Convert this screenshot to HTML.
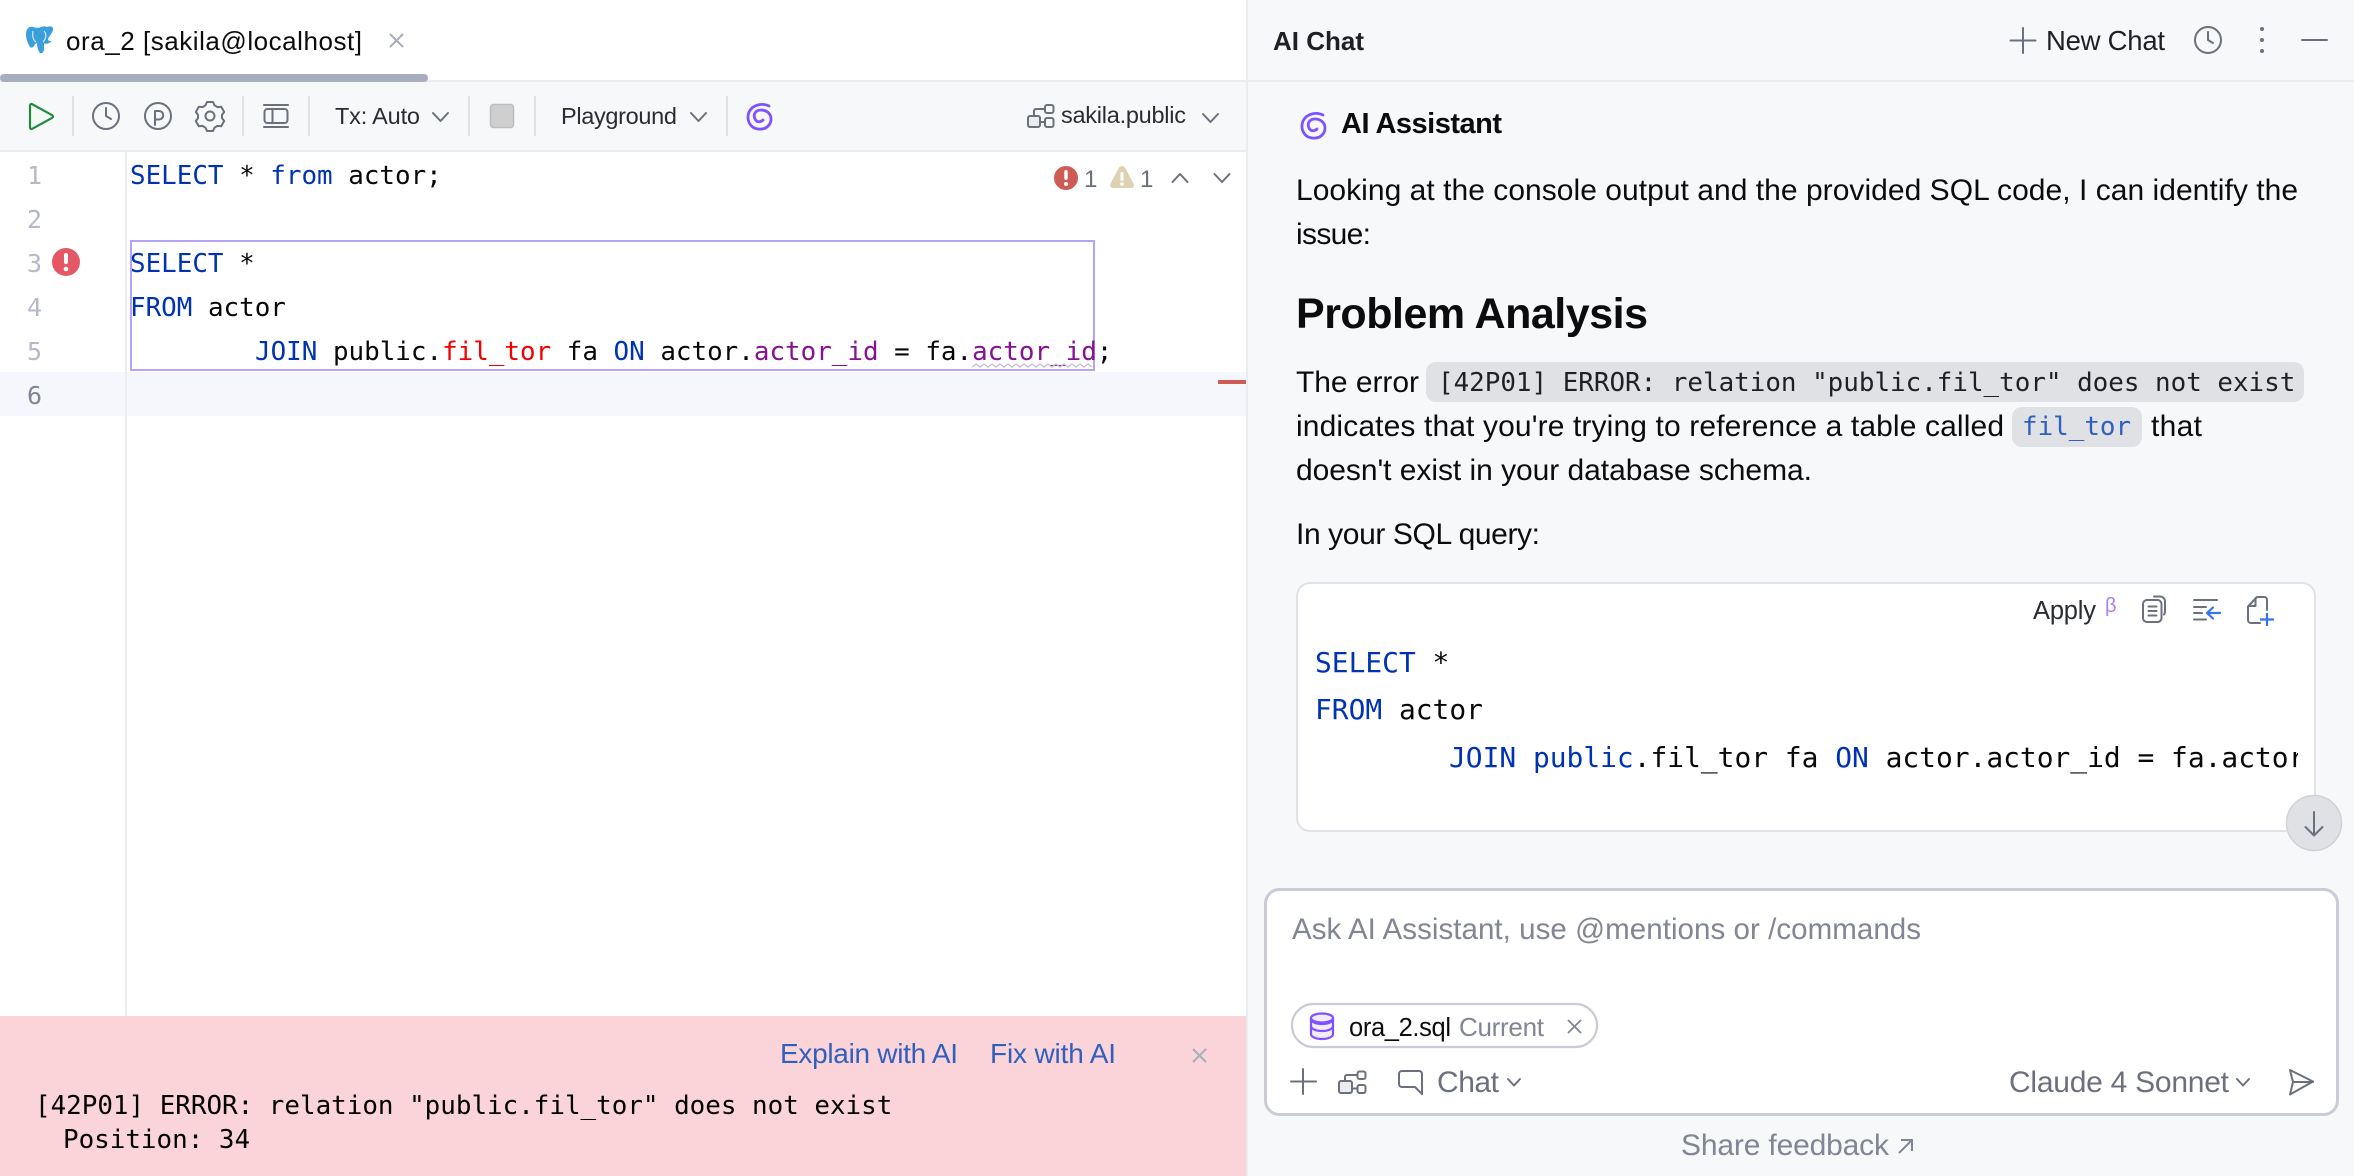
<!DOCTYPE html>
<html><head><meta charset="utf-8"><title>ora_2</title>
<style>
html,body{margin:0;padding:0;background:#fff;overflow:hidden}
svg{display:block}
text{font-family:"Liberation Sans",sans-serif;white-space:pre}
.m{font-family:"DejaVu Sans Mono","Liberation Mono",monospace;font-size:25.9px;fill:#080808}
.c{font-size:27.9px}
.k{fill:#0033b3}.r{fill:#f50000}.p{fill:#871094}
.n{font-family:"DejaVu Sans Mono","Liberation Mono",monospace;font-size:25px;fill:#b5b9c9}
.i{fill:none;stroke:#6c707e;stroke-width:2;stroke-linecap:round;stroke-linejoin:round}
.b{font-size:30px;fill:#0b0c0e}
.t{font-size:23.5px;fill:#2a2c33}
.g{font-size:30px;fill:#6c707e}
.v{fill:none;stroke:#7f52ff;stroke-width:2.8;stroke-linecap:round;stroke-linejoin:round}
</style></head><body>
<svg width="2354" height="1176" viewBox="0 0 2354 1176" xmlns="http://www.w3.org/2000/svg">
<rect width="2354" height="1176" fill="#fff"/>
<!-- right panel -->
<rect x="1246" width="1108" height="1176" fill="#f7f8fa"/>
<!-- toolbar -->
<rect y="82" width="1246" height="68" fill="#f7f8fa"/>
<rect y="80" width="2354" height="2" fill="#ebecf0"/>
<rect y="150" width="1246" height="2" fill="#ebecf0"/>
<rect x="1246" width="2" height="1176" fill="#ebecf0"/>
<rect x="0" y="74" width="428" height="8" rx="4" fill="#a8adbd"/>

<!-- tab -->
<path d="M33 27c-4-1-7 2-7 7 0 5 2 10 4 13 1 1 3 1 4-1 1-2 2-3 3-3 0 3 1 8 3 10 2 1 4-1 4-4l0-6c1 1 3 1 5 0 2-1 3-2 2-2-1 0-3 0-3-2 1-3 5-6 5-10 0-3-3-3-6-2-2-1-4-1-6 0-2 1-5 1-8 0z" fill="#3b9fdb"/>
<path d="M33 31c-1 4 0 9 3 11M44 31c3 3 2 8-1 11" fill="none" stroke="#cfe8f7" stroke-width="1.200"/>
<text x="66" y="50" font-size="26" fill="#0b0c0e" textLength="296" lengthAdjust="spacing">ora_2 [sakila@localhost]</text>
<path d="M390 34l13 13M403 34l-13 13" fill="none" stroke="#a8adbd" stroke-width="2"/>

<!-- toolbar icons -->
<path d="M30 105.500v22a1.500 1.500 0 0 0 2.200 1.300l20-11a1.500 1.500 0 0 0 0-2.600l-20-11a1.500 1.500 0 0 0-2.200 1.300z" fill="#f4fbf5" stroke="#208a3c" stroke-width="2.200" stroke-linejoin="round"/>
<rect x="72" y="96" width="2" height="40" fill="#dfe1e5"/>
<circle cx="106" cy="116" r="13" class="i"/><path d="M106 108v8l5 3" class="i"/>
<circle cx="158" cy="116" r="13" class="i"/><path d="M155 125v-14h4a4 4 0 0 1 0 8.500h-4" class="i"/>
<path d="M207 104.500h6l1.500 3.300 3 1.800 3.700-.4 3 5.300-2.200 2.900v3.200l2.200 2.900-3 5.300-3.700-.4-3 1.800-1.500 3.300h-6l-1.500-3.300-3-1.800-3.700.4-3-5.300 2.200-2.900v-3.200l-2.200-2.900 3-5.300 3.700.4 3-1.800z" class="i" transform="translate(0 -2.500)"/>
<circle cx="210" cy="116" r="4.500" class="i"/>
<rect x="242" y="96" width="2" height="40" fill="#dfe1e5"/>
<path d="M264 105h24M264 127h24" class="i"/><rect x="264.500" y="109" width="23" height="14" rx="3" class="i"/><path d="M272.500 109.500v13" class="i"/>
<rect x="308" y="96" width="2" height="40" fill="#dfe1e5"/>
<text x="335" y="124" class="t" textLength="85" lengthAdjust="spacing">Tx: Auto</text>
<path d="M433 113l7.500 8 7.500-8" class="i"/>
<rect x="468" y="96" width="2" height="40" fill="#dfe1e5"/>
<rect x="490.500" y="104.500" width="23" height="23" rx="3" fill="#cfcfcf" stroke="#bdbdbd" stroke-width="1.500"/>
<rect x="534" y="96" width="2" height="40" fill="#dfe1e5"/>
<text x="561" y="124" class="t" textLength="116" lengthAdjust="spacing">Playground</text>
<path d="M691 113l7.500 8 7.500-8" class="i"/>
<rect x="726" y="96" width="2" height="40" fill="#dfe1e5"/>
<path d="M28 9C22 6 12 7 8 15C5 23 9 31 17 32C25 33 30 28 30 22C30 16 25 13 20 13C14 13 12 18 14 22C16 26 20 25 22 23" class="v" transform="translate(741 97)"/>

<rect x="1028" y="116" width="12" height="11" rx="2" fill="#ebecf0" stroke="#6c707e" stroke-width="2"/>
<rect x="1045" y="105" width="8.500" height="8" rx="2" fill="none" stroke="#6c707e" stroke-width="2"/>
<rect x="1045" y="118" width="8.500" height="9" rx="2" fill="none" stroke="#6c707e" stroke-width="2"/>
<path d="M1034 116v-5a2 2 0 0 1 2-2h9M1040 122h5" class="i"/>
<text x="1061" y="123" class="t" textLength="125" lengthAdjust="spacing">sakila.public</text>
<path d="M1203 114l7.500 8 7.500-8" class="i"/>

<!-- editor -->
<rect y="372" width="1246" height="44" fill="#f5f7fd"/>
<rect x="125" y="152" width="2" height="864" fill="#ebecf0"/>
<text x="27" y="184" class="n">1</text>
<text x="27" y="228" class="n">2</text>
<text x="27" y="272" class="n">3</text>
<text x="27" y="316" class="n">4</text>
<text x="27" y="360" class="n">5</text>
<text x="27" y="404" class="n" style="fill:#818594">6</text>
<circle cx="66" cy="262" r="14" fill="#e55765"/>
<rect x="64" y="253" width="4" height="11" rx="2" fill="#fff"/><circle cx="66" cy="269" r="2.300" fill="#fff"/>

<rect x="131" y="241" width="963" height="129" fill="none" stroke="#b5a3fb" stroke-width="2"/>
<text x="130" y="184" class="m"><tspan class="k">SELECT</tspan> * <tspan class="k">from</tspan> actor;</text>
<text x="130" y="272" class="m"><tspan class="k">SELECT</tspan> *</text>
<text x="130" y="316" class="m"><tspan class="k">FROM</tspan> actor</text>
<text x="255" y="360" class="m"><tspan class="k">JOIN</tspan> public.<tspan class="r">fil_tor</tspan> fa <tspan class="k">ON</tspan> actor.<tspan class="p">actor_id</tspan> = fa.<tspan class="p">actor_id</tspan>;</text>
<path d="M972 367l4-3 4 3 4-3 4 3 4-3 4 3 4-3 4 3 4-3 4 3 4-3 4 3 4-3 4 3 4-3 4 3 4-3 4 3 4-3 4 3 4-3 4 3 4-3 4 3 4-3 4 3 4-3 4 3 4-3 4 3" fill="none" stroke="#c0bec8" stroke-width="1.300"/>
<rect x="1218" y="380" width="28" height="4" fill="#cf5b56"/>

<circle cx="1066" cy="178" r="12" fill="#cf5b56"/>
<rect x="1064.300" y="170" width="3.400" height="10" rx="1.700" fill="#fff"/><circle cx="1066" cy="184" r="2" fill="#fff"/>
<text x="1084" y="187" font-size="24" fill="#6c707e">1</text>
<path d="M1122 166c1.500 0 2.500 1 3.500 2.500l8 15c1 2 0 4.500-2.500 4.500h-18c-2.500 0-3.500-2.500-2.500-4.500l8-15c1-1.500 2-2.500 3.500-2.500z" fill="#dfd1b1"/>
<rect x="1120.500" y="172" width="3" height="9" rx="1.500" fill="#fff"/><circle cx="1122" cy="184" r="1.800" fill="#fff"/>
<text x="1140" y="187" font-size="24" fill="#6c707e">1</text>
<path d="M1172.500 182l7.500-8 7.500 8" class="i"/>
<path d="M1214.500 174l7.500 8 7.500-8" class="i"/>

<!-- error panel -->
<rect y="1016" width="1246" height="160" fill="#fad4d8"/>
<text x="780" y="1063" font-size="28" fill="#315fbd" textLength="178" lengthAdjust="spacing">Explain with AI</text>
<text x="990" y="1063" font-size="28" fill="#315fbd" textLength="126" lengthAdjust="spacing">Fix with AI</text>
<path d="M1193 1049l13 13M1206 1049l-13 13" fill="none" stroke="#a8adbd" stroke-width="2"/>
<text x="35" y="1114" class="m" style="fill:#000">[42P01] ERROR: relation "public.fil_tor" does not exist</text>
<text x="63" y="1148" class="m" style="fill:#000">Position: 34</text>

<!-- AI chat header -->
<text x="1273" y="50" font-size="26" font-weight="700" fill="#1e2025" textLength="91" lengthAdjust="spacing">AI Chat</text>
<path d="M2023 28v25M2010.500 40.500h25" class="i"/>
<text x="2046" y="50" font-size="27.500" fill="#1e2025" textLength="119" lengthAdjust="spacing">New Chat</text>
<circle cx="2208" cy="40" r="13" class="i"/><path d="M2208 32v8l5 3" class="i"/>
<circle cx="2262" cy="29" r="2" fill="#6c707e"/><circle cx="2262" cy="40" r="2" fill="#6c707e"/><circle cx="2262" cy="51" r="2" fill="#6c707e"/>
<path d="M2302 40h25" class="i"/>

<!-- message -->
<path d="M28 9C22 6 12 7 8 15C5 23 9 31 17 32C25 33 30 28 30 22C30 16 25 13 20 13C14 13 12 18 14 22C16 26 20 25 22 23" class="v" transform="translate(1295 106)"/>
<text x="1341" y="133" font-size="29" font-weight="700" fill="#0b0c0e" textLength="161" lengthAdjust="spacing">AI Assistant</text>
<text x="1296" y="200" class="b" textLength="1002" lengthAdjust="spacing">Looking at the console output and the provided SQL code, I can identify the</text>
<text x="1296" y="244" class="b" textLength="75" lengthAdjust="spacing">issue:</text>
<text x="1296" y="328" font-size="43" font-weight="700" fill="#0b0c0e" textLength="352" lengthAdjust="spacing">Problem Analysis</text>

<text x="1296" y="392" class="b" textLength="123" lengthAdjust="spacing">The error</text>
<rect x="1426" y="362" width="878" height="40" rx="10" fill="#dfe1e5"/>
<text x="1438" y="391" class="m" style="fill:#1e2025">[42P01] ERROR: relation "public.fil_tor" does not exist</text>
<text x="1296" y="436" class="b" textLength="708" lengthAdjust="spacing">indicates that you're trying to reference a table called</text>
<rect x="2012" y="407" width="130" height="40" rx="10" fill="#dfe1e5"/>
<text x="2022" y="435" class="m" style="fill:#2f5fbf">fil_tor</text>
<text x="2151" y="436" class="b" textLength="51" lengthAdjust="spacing">that</text>
<text x="1296" y="480" class="b" textLength="516" lengthAdjust="spacing">doesn't exist in your database schema.</text>
<text x="1296" y="544" class="b" textLength="244" lengthAdjust="spacing">In your SQL query:</text>

<!-- code card -->
<rect x="1297" y="583" width="1018" height="248" rx="13" fill="#fff" stroke="#e0e2e8" stroke-width="2"/>
<text x="2033" y="619" font-size="25.500" fill="#2a2c33" textLength="63" lengthAdjust="spacing">Apply</text>
<text x="2105" y="612" font-size="20" fill="#b07ff0">β</text>
<rect x="2143" y="600" width="18.500" height="22" rx="4" class="i"/>
<path d="M2154 596.500h6a5 5 0 0 1 5 5v10a5 5 0 0 1-1 3" class="i"/>
<path d="M2148.500 606.500h8M2148.500 611h8M2148.500 615.500h8" class="i" stroke-linecap="butt"/>
<path d="M2194 600h23M2194 607h12M2194 613h8M2194 619.500h12" class="i"/>
<path d="M2220 613h-12M2213 607.500l-6 5.500 6 5.500" fill="none" stroke="#3574f0" stroke-width="2.200" stroke-linecap="round" stroke-linejoin="round"/>
<path d="M2267 610v-10a3 3 0 0 0-3-3h-7l-9 9.500v13.500a3 3 0 0 0 3 3h9M2255.500 598v8h-7" class="i"/>
<path d="M2267 613v13M2260 619.500h14" fill="none" stroke="#3574f0" stroke-width="2.200"/>
<clipPath id="cc"><rect x="1300" y="640" width="998" height="160"/></clipPath>
<g clip-path="url(#cc)">
<text x="1315" y="672" class="m c"><tspan class="k">SELECT</tspan> *</text>
<text x="1315" y="719" class="m c"><tspan class="k">FROM</tspan> actor</text>
<text x="1449" y="767" class="m c"><tspan class="k">JOIN public</tspan>.fil_tor fa <tspan class="k">ON</tspan> actor.actor_id = fa.actor_id;</text>
</g>
<circle cx="2314" cy="823" r="27.500" fill="#dfe1e5" stroke="#d0d2d9" stroke-width="1.500"/>
<path d="M2314 812v23M2305.500 827l8.500 8.500 8.500-8.500" class="i"/>

<!-- input -->
<rect x="1265.500" y="889.500" width="1072" height="225" rx="14" fill="#fff" stroke="#c9ccd6" stroke-width="3"/>
<text x="1292" y="939" font-size="29.500" fill="#818594" textLength="629" lengthAdjust="spacing">Ask AI Assistant, use @mentions or /commands</text>
<rect x="1292" y="1004" width="305" height="43" rx="21.500" fill="#fff" stroke="#c9ccd6" stroke-width="2.200"/>
<path d="M1311 1018v16c0 3 5 5 11 5s11-2 11-5v-16z" fill="#f1ecfe" stroke="#7f52ff" stroke-width="2.200"/>
<path d="M1311 1026c0 3 5 5 11 5s11-2 11-5M1311 1019c0 3 5 5 11 5s11-2 11-5" fill="none" stroke="#7f52ff" stroke-width="2.200"/>
<ellipse cx="1322" cy="1018" rx="11" ry="4.500" fill="#f1ecfe" stroke="#7f52ff" stroke-width="2.200"/>
<text x="1349" y="1036" font-size="25.500" fill="#0b0c0e" textLength="102" lengthAdjust="spacing">ora_2.sql</text>
<text x="1459" y="1036" font-size="26" fill="#818594" textLength="85" lengthAdjust="spacing">Current</text>
<path d="M1568 1020l13 13M1581 1020l-13 13" fill="none" stroke="#818594" stroke-width="1.800"/>

<path d="M1303 1069v25M1291 1081.500h25" class="i"/>
<rect x="1339" y="1081" width="13" height="12" rx="2" fill="#ebecf0" stroke="#6c707e" stroke-width="2"/>
<rect x="1357.500" y="1071.500" width="8" height="7.500" rx="2" fill="none" stroke="#6c707e" stroke-width="2"/>
<rect x="1357.500" y="1085" width="8" height="8" rx="2" fill="none" stroke="#6c707e" stroke-width="2"/>
<path d="M1345 1081v-4a2 2 0 0 1 2-2h10M1352 1088.500h5" class="i"/>
<path d="M1402 1071h17a3 3 0 0 1 3 3v20l-7-7h-13a3 3 0 0 1-3-3v-10a3 3 0 0 1 3-3z" class="i"/>
<text x="1437" y="1092" class="g" textLength="62" lengthAdjust="spacing">Chat</text>
<path d="M1508 1079l6 6.500 6-6.500" class="i"/>
<text x="2009" y="1092" class="g" textLength="220" lengthAdjust="spacing">Claude 4 Sonnet</text>
<path d="M2237 1079l6 6.500 6-6.500" class="i"/>
<path d="M2290 1070l23 11.500-23 13 3-12.500zM2293 1082h20" class="i"/>

<text x="1681" y="1155" font-size="30" fill="#818594" textLength="208" lengthAdjust="spacing">Share feedback</text>
<path d="M1899 1153l13-13M1901 1140h11v11" fill="none" stroke="#818594" stroke-width="2"/>
</svg>
</body></html>
